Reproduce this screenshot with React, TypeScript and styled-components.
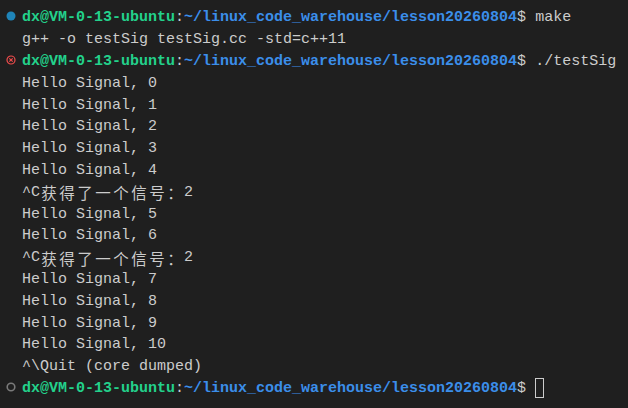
import React from "react";
import styled, { createGlobalStyle } from "styled-components";

const Global = createGlobalStyle`
  html, body { margin: 0; padding: 0; background: #1f1f1f; }
  body { width: 628px; height: 408px; overflow: hidden; }
`;

const Terminal = styled.div`
  box-sizing: border-box;
  width: 628px;
  height: 408px;
  background: #1f1f1f;
  padding-top: 7px;
  font-family: "Liberation Mono", "DejaVu Sans Mono", monospace;
  font-size: 15px;
  color: #cccccc;
  display: flex;
  flex-direction: column;
`;

const Line = styled.div`
  display: flex;
  align-items: center;
  height: 21.8px;
  white-space: pre;
`;

const Gutter = styled.div`
  width: 22px;
  height: 100%;
  flex: none;
  display: flex;
  align-items: center;
  justify-content: center;
  padding-bottom: 3px;
  box-sizing: border-box;
`;

const Text = styled.span`
  display: inline-flex;
  align-items: center;
`;

const User = styled.span`
  color: #23d18b;
  font-weight: bold;
`;

const Path = styled.span`
  color: #3b8eea;
  font-weight: bold;
`;

const Wide = styled.span`
  display: inline-block;
  width: 18px;
  text-align: center;
  font-family: "Noto Sans CJK SC", sans-serif;
  font-size: 15.5px;
`;

const Cursor = styled.span`
  display: inline-block;
  width: 9px;
  height: 20px;
  box-sizing: border-box;
  border: 1px solid #cccccc;
`;

type Deco = "ok" | "err" | "idle";

const Decoration = ({ kind }: { kind: Deco }) => {
  if (kind === "ok")
    return (
      <svg width="10" height="10" viewBox="0 0 10 10">
        <circle cx="5" cy="5" r="4.5" fill="#1f84b8" />
      </svg>
    );
  if (kind === "err")
    return (
      <svg width="10" height="10" viewBox="0 0 10 10">
        <circle cx="5" cy="5" r="4" fill="none" stroke="#f14c4c" strokeWidth="1.2" />
        <path d="M3.3 3.3 L6.7 6.7 M6.7 3.3 L3.3 6.7" stroke="#f14c4c" strokeWidth="1.2" />
      </svg>
    );
  return (
    <svg width="10" height="10" viewBox="0 0 10 10">
      <circle cx="5" cy="5" r="3.8" fill="none" stroke="#7a7a7a" strokeWidth="1.6" />
    </svg>
  );
};

const Prompt = () => (
  <>
    <User>dx@VM-0-13-ubuntu</User>:<Path>~/linux_code_warehouse/lesson20260804</Path>$
  </>
);

const Signal = () => (
  <Text>
    ^C
    {"获得了一个信号：".split("").map((c, i) => (
      <Wide key={i}>{c}</Wide>
    ))}
    2
  </Text>
);

export default function App() {
  const hello = (n: number) => `Hello Signal, ${n}`;
  return (
    <>
      <Global />
      <Terminal>
        <Line>
          <Gutter><Decoration kind="ok" /></Gutter>
          <Text><Prompt /> make</Text>
        </Line>
        <Line>
          <Gutter />
          <Text>g++ -o testSig testSig.cc -std=c++11</Text>
        </Line>
        <Line>
          <Gutter><Decoration kind="err" /></Gutter>
          <Text><Prompt /> ./testSig</Text>
        </Line>
        {[0, 1, 2, 3, 4].map((n) => (
          <Line key={`a${n}`}><Gutter /><Text>{hello(n)}</Text></Line>
        ))}
        <Line><Gutter /><Signal /></Line>
        {[5, 6].map((n) => (
          <Line key={`b${n}`}><Gutter /><Text>{hello(n)}</Text></Line>
        ))}
        <Line><Gutter /><Signal /></Line>
        {[7, 8, 9, 10].map((n) => (
          <Line key={`c${n}`}><Gutter /><Text>{hello(n)}</Text></Line>
        ))}
        <Line>
          <Gutter />
          <Text>^\Quit (core dumped)</Text>
        </Line>
        <Line>
          <Gutter><Decoration kind="idle" /></Gutter>
          <Text><Prompt /> <Cursor /></Text>
        </Line>
      </Terminal>
    </>
  );
}
